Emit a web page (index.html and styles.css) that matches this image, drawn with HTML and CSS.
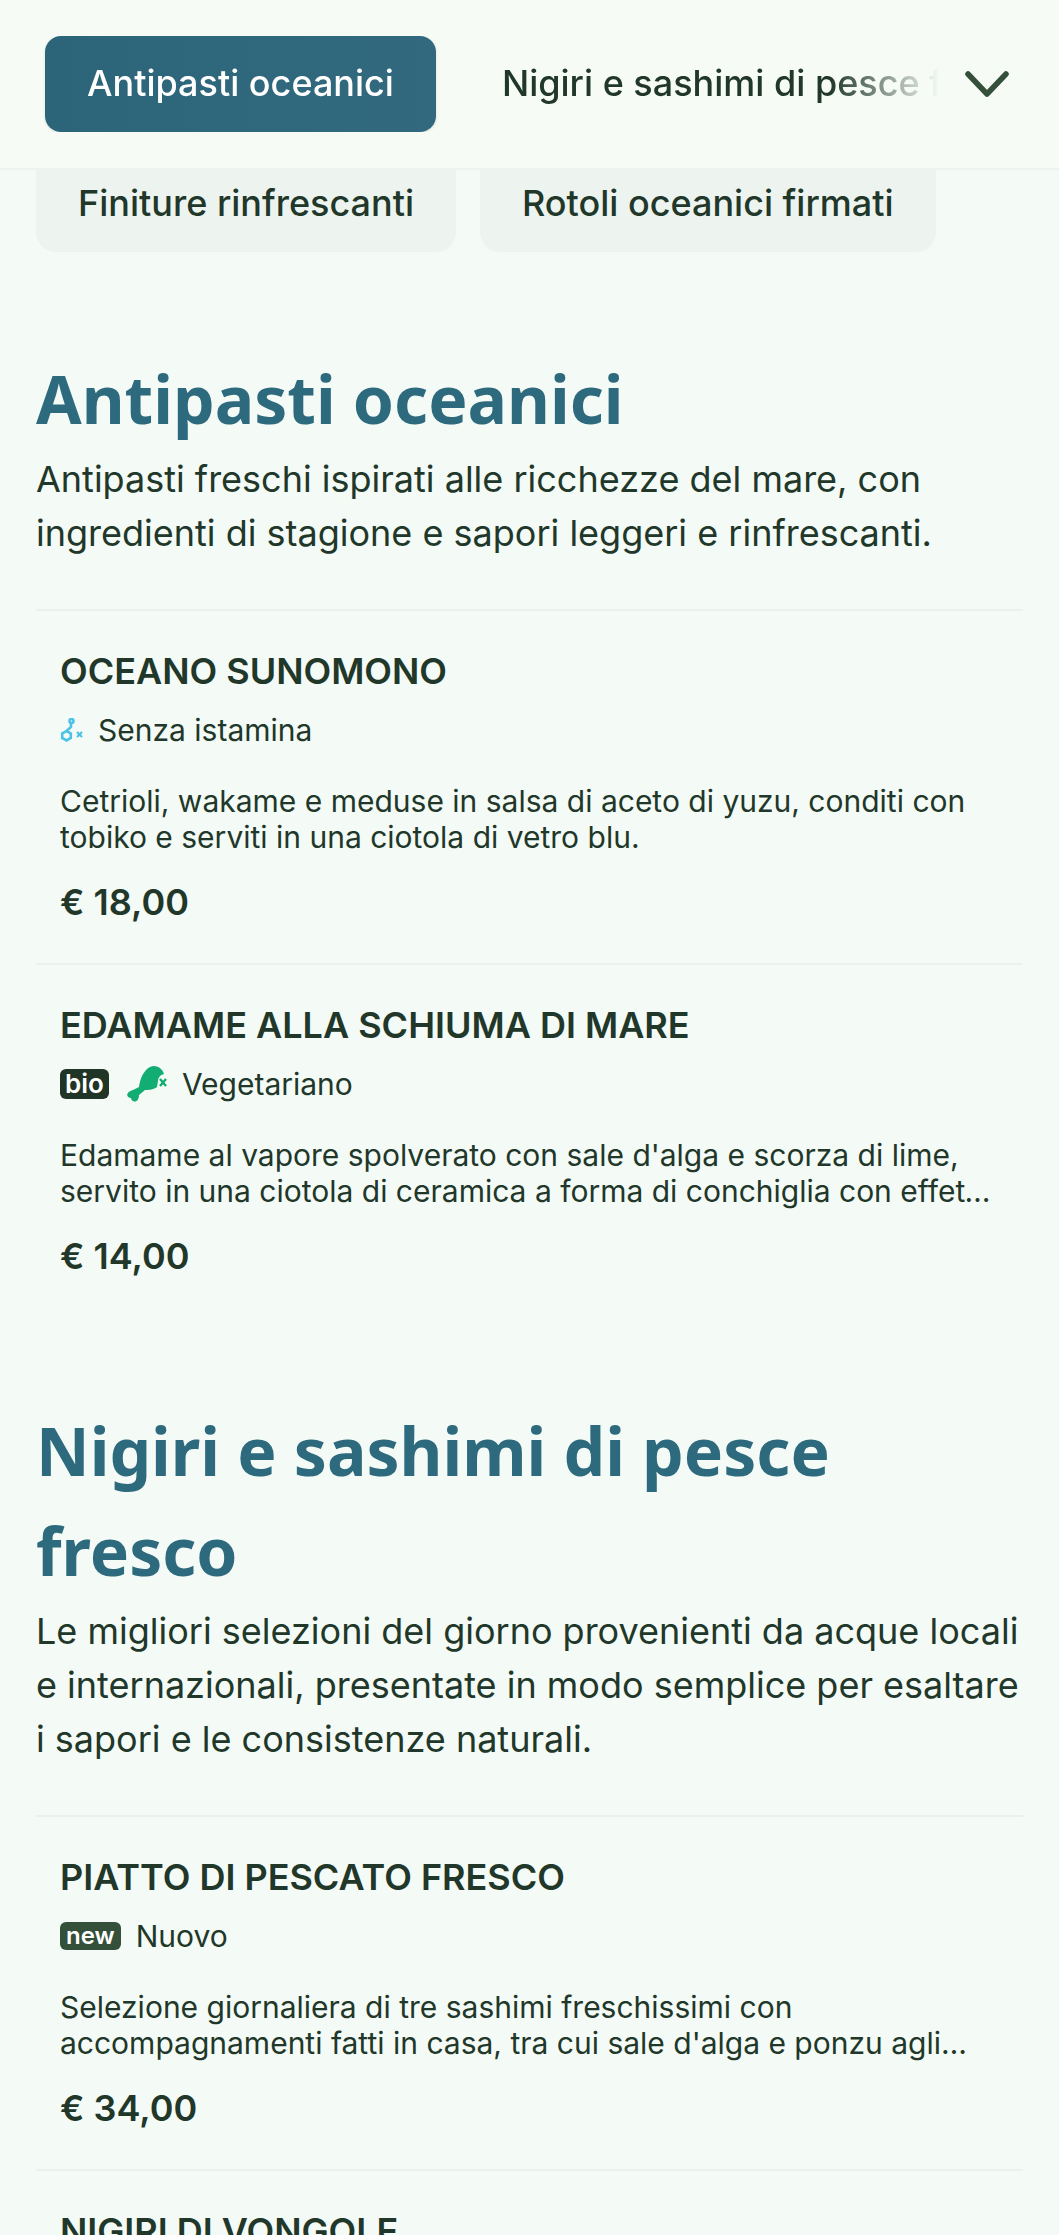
FILE: index.html
```html
<!DOCTYPE html>
<html lang="it">
<head>
    <meta charset="UTF-8">
    <meta name="viewport" content="width=device-width, initial-scale=1.0">
    <title>Menu</title>
    <link rel="stylesheet" href="styles.css">
</head>

<body>
    <div class="page">
        <!-- Sticky category bar -->
        <div class="topbar">
            <div class="tabs">
                <a class="tab tab-active" href="#antipasti">Antipasti oceanici</a>
                <a class="tab" href="#nigiri">Nigiri e sashimi di pesce fresco</a>
            </div>
            <svg class="chevron" viewBox="0 0 44 26" width="44" height="26">
                <path d="M3 3 L22 23 L41 3" fill="none" stroke="#34503a" stroke-width="5.5" stroke-linecap="round" stroke-linejoin="round"/>
            </svg>
        </div>

        <div class="pills">
            <a class="pill" href="#finiture">Finiture rinfrescanti</a>
            <a class="pill" href="#rotoli">Rotoli oceanici firmati</a>
        </div>

        <section class="section section-first" id="antipasti">
            <h2>Antipasti oceanici</h2>
            <p class="section-desc">Antipasti freschi ispirati alle ricchezze del mare, con ingredienti di stagione e sapori leggeri e rinfrescanti.</p>

            <div class="item">
                <h3>OCEANO SUNOMONO</h3>
                <div class="tags">
                    <svg class="icon-small" viewBox="0 0 23 24" width="23" height="24">
                        <g fill="none" stroke="#4cc3e6" stroke-width="2.6">
                            <circle cx="11.5" cy="3" r="2"/>
                            <path d="M11 5.5 L11 9 L7 12.5"/>
                            <path d="M6.5 13 L10.8 15.4 L10.8 20 L6.5 22.4 L2.2 20 L2.2 15.4 Z"/>
                            <path d="M17 14 L22 19 M22 14 L17 19" stroke-width="2.2"/>
                        </g>
                    </svg>
                    <span>Senza istamina</span>
                </div>
                <p class="item-desc">Cetrioli, wakame e meduse in salsa di aceto di yuzu, conditi con tobiko e serviti in una ciotola di vetro blu.</p>
                <div class="price">€ 18,00</div>
            </div>

            <div class="item">
                <h3>EDAMAME ALLA SCHIUMA DI MARE</h3>
                <div class="tags">
                    <span class="badge badge-dark">bio</span>
                    <svg class="icon-leg" viewBox="0 0 40 36" width="40" height="36">
                        <path fill="#12ad72" d="M27 0 C32 0 36 4 37 8 C33 9 31 12 31 15 L30 21 C26 24 21 24 18 24 L12 29 C12 33 10 36 7 35.5 C5 35 4 33 4 32 C1 32 -1 29 1 27 C2 25 4 25 6 24 L12 21 C13 14 15 8 20 3 C22 1 25 0 27 0 Z"/>
                        <path d="M33 13 L39 20 M39 13 L33 20" fill="none" stroke="#12ad72" stroke-width="2.4"/>
                    </svg>
                    <span>Vegetariano</span>
                </div>
                <p class="item-desc clamp">Edamame al vapore spolverato con sale d'alga e scorza di lime, servito in una ciotola di ceramica a forma di conchiglia con effetto schiuma di mare.</p>
                <div class="price">€ 14,00</div>
            </div>
        </section>

        <section class="section" id="nigiri">
            <h2>Nigiri e sashimi di pesce fresco</h2>
            <p class="section-desc">Le migliori selezioni del giorno provenienti da acque locali e internazionali, presentate in modo semplice per esaltare i sapori e le consistenze naturali.</p>

            <div class="item">
                <h3>PIATTO DI PESCATO FRESCO</h3>
                <div class="tags">
                    <span class="badge badge-green">new</span>
                    <span>Nuovo</span>
                </div>
                <p class="item-desc clamp">Selezione giornaliera di tre sashimi freschissimi con accompagnamenti fatti in casa, tra cui sale d'alga e ponzu agli agrumi del territorio.</p>
                <div class="price">€ 34,00</div>
            </div>

            <div class="item">
                <h3>NIGIRI DI VONGOLE</h3>
            </div>
        </section>
    </div>
</body>
</html>
```

FILE: styles.css
```css
html, body {
    margin: 0;
    padding: 0;
}
body {
    font-family: Inter, "Liberation Sans", sans-serif;
    background-color: #f4faf5;
    color: #21372a;
}
a {
    text-decoration: none;
    color: inherit;
}
.page {
    height: 100vh;
    overflow: hidden;
}
.topbar {
    position: relative;
    z-index: 1;
    height: 170px;
    display: flex;
    align-items: center;
    background-color: #f6fbf6;
    border-bottom: 2px solid #eef3ef;
    box-sizing: border-box;
}
.tabs {
    flex: 1;
    min-width: 0;
    display: flex;
    align-items: center;
    gap: 24px;
    padding-left: 45px;
    overflow: hidden;
    white-space: nowrap;
    -webkit-mask-image: linear-gradient(to right, #000 830px, transparent 940px);
    mask-image: linear-gradient(to right, #000 830px, transparent 940px);
}
.tab {
    flex: none;
    height: 96px;
    display: flex;
    align-items: center;
    padding: 0 42px 2px;
    box-sizing: border-box;
    font-size: 36px;
    font-weight: 500;
    border-radius: 16px;
}
.tab-active {
    color: #fff;
    background: linear-gradient(90deg, #2c6579, #32697f);
    box-shadow: 0 1px 3px rgba(0, 0, 0, 0.12);
}
.chevron {
    flex: none;
    margin: 0 50px 0 24px;
}
.pills {
    display: flex;
    gap: 24px;
    padding: 0 36px;
    margin-top: -22px;
}
.pill {
    display: flex;
    align-items: center;
    height: 104px;
    padding: 6px 42px 0;
    box-sizing: border-box;
    font-size: 36px;
    font-weight: 500;
    background-color: #edf4f0;
    border-radius: 20px;
}
.section {
    padding: 0 36px;
    margin-top: 83px;
}
.section-first {
    margin-top: 96px;
}
h2 {
    margin: 0 0 4px;
    font-family: "Noto Sans", sans-serif;
    font-weight: 700;
    font-size: 66px;
    line-height: 100px;
    color: #2e6a7e;
}
.section-desc {
    margin: 0 0 49px;
    font-size: 36px;
    line-height: 54px;
}
.item {
    border-top: 2px solid #edf1ee;
    padding: 36px 24px 37px;
}
h3 {
    margin: 0;
    font-size: 36px;
    font-weight: 600;
    line-height: 48px;
}
.tags {
    display: flex;
    align-items: center;
    gap: 15px;
    margin-top: 13px;
    font-size: 30px;
    line-height: 44px;
}
.icon-small, .icon-leg {
    flex: none;
}
.badge {
    color: #fff;
    font-size: 24px;
    font-weight: 600;
    line-height: 28px;
    padding: 0 6px;
    border-radius: 6px;
}
.badge-dark {
    background-color: #213527;
    font-size: 26px;
    line-height: 30px;
    padding: 0 5px;
    margin-right: 3px;
}
.badge-green {
    background-color: #34503a;
}
.item-desc {
    margin: 31px 0 0;
    font-size: 30px;
    line-height: 36px;
}
.clamp {
    display: -webkit-box;
    -webkit-box-orient: vertical;
    -webkit-line-clamp: 2;
    overflow: hidden;
}
.price {
    margin-top: 23px;
    font-size: 36px;
    font-weight: 600;
    line-height: 48px;
}
```
